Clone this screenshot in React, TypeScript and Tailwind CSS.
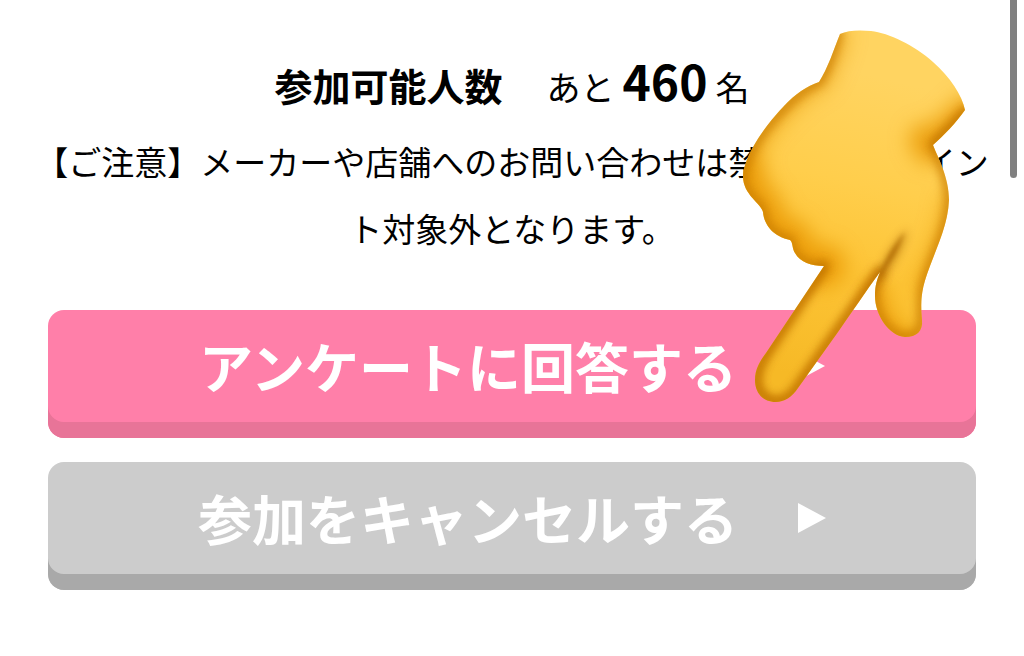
const HAND =
  "M840 34 C848 30 860 30 871 31 C889 33 914 45 933 62 C950 77 962 95 965 110 C956 123 944 135 933 145 C938 158 949 177 949 200 C948 223 939 242 930 266 C922 287 920 298 922 320 C923 331 917 337 905 337 C889 336 875 315 875 296 C875 285 877 280 880 272 C866 291 852 312 838 332 L798 388 C792 397 784 402 776 402 C763 402 755 393 755 380 C755 369 760 361 766 353 L824 266 C811 266 800 262 795 253 C792 249 793 242 790 240 C775 237 764 226 763 212 C761 203 743 195 743 176 C744 158 761 130 784 106 C795 94 807 86 819 82 C828 68 834 49 840 34 Z";

function PointingHand() {
  return (
    <svg
      viewBox="740 26 230 380"
      className="pointer-events-none absolute top-[26px] right-[54px] h-[380px] w-[230px]"
      aria-hidden="true"
    >
      <defs>
        <linearGradient id="skin" gradientUnits="userSpaceOnUse" x1="890" y1="80" x2="820" y2="380">
          <stop offset="0" stopColor="#ffd461" />
          <stop offset="0.35" stopColor="#ffce4c" />
          <stop offset="0.65" stopColor="#fdc435" />
          <stop offset="1" stopColor="#f6b926" />
        </linearGradient>
        <clipPath id="hand-clip">
          <path d={HAND} />
        </clipPath>
        <filter id="soft-wide" filterUnits="userSpaceOnUse" x="700" y="0" width="310" height="440">
          <feGaussianBlur stdDeviation="10" />
        </filter>
        <filter id="soft" filterUnits="userSpaceOnUse" x="700" y="0" width="310" height="440">
          <feGaussianBlur stdDeviation="5" />
        </filter>
        <filter id="soft-fine" filterUnits="userSpaceOnUse" x="700" y="0" width="310" height="440">
          <feGaussianBlur stdDeviation="2" />
        </filter>
      </defs>
      <path d={HAND} fill="url(#skin)" />
      <g clipPath="url(#hand-clip)" fill="none" strokeLinecap="round" strokeLinejoin="round">
        <g stroke="#e89600" filter="url(#soft-wide)">
          <path
            d="M838 34 C834 49 828 68 819 82 C795 90 744 145 743 176"
            strokeWidth="20"
            opacity="0.55"
          />
          <path
            d="M743 168 C743 195 761 203 763 212 C764 226 775 237 790 240 C793 262 811 266 824 266"
            strokeWidth="42"
            opacity="0.8"
          />
          <path d="M968 112 L930 148 L925 140" strokeWidth="32" opacity="0.8" />
          <path d="M949 200 C949 230 930 260 923 288" strokeWidth="14" opacity="0.6" />
          <path d="M875 290 C875 315 889 340 908 340" strokeWidth="22" opacity="0.7" />
        </g>
        <path
          d="M838 32 C834 49 828 68 819 82 C795 90 744 145 743 176 C743 195 761 203 763 212 C764 226 775 237 790 240 C793 262 811 266 824 266 L766 353 C745 385 762 402 776 402 C790 402 798 388 798 388 L880 272 C865 310 889 336 905 337 C930 337 918 310 923 288 C930 260 949 230 949 200 C949 177 938 158 933 145 L967 110"
          stroke="#c97c00"
          strokeWidth="9"
          opacity="0.85"
          filter="url(#soft)"
        />
        <g stroke="#c07400" filter="url(#soft)">
          <path d="M824 266 L766 353 C745 385 762 402 776 402 C790 402 798 388 798 388 L880 272" strokeWidth="9" opacity="0.75" />
          <path d="M967 112 L934 145" strokeWidth="6" opacity="0.7" />
        </g>
        <path
          d="M876 284 C880 266 891 246 908 229 C902 250 894 262 884 276 Z"
          fill="#a96400"
          opacity="0.65"
          filter="url(#soft)"
        />
        <path
          d="M877 280 C884 262 893 246 905 232 C899 248 892 260 881 275 Z"
          fill="#a96400"
          opacity="0.75"
          filter="url(#soft-fine)"
        />
      </g>
    </svg>
  );
}

function Arrow() {
  return (
    <svg viewBox="0 0 28 32" className="h-8 w-7 shrink-0" aria-hidden="true">
      <path d="M0 1 L28 16 L0 31 Z" fill="#fff" />
    </svg>
  );
}

const BUTTON =
  "flex h-32 w-full items-center justify-center gap-[60px] rounded-2xl pb-4 text-[54px] leading-none font-bold whitespace-nowrap text-white";

export default function App() {
  return (
    <main
      lang="ja"
      className="relative min-h-screen overflow-hidden bg-white pt-10 pb-16 text-center font-['Noto_Sans_CJK_JP',sans-serif] text-black"
    >
      <p className="mb-2 flex h-20 items-baseline justify-center text-[34px] leading-[80px]">
        <strong className="text-[38px] font-bold">参加可能人数</strong>
        <span className="ml-11">あと</span>
        <strong className="ml-2 text-[48px] font-bold">460</strong>
        <span className="ml-2">名</span>
      </p>
      <p className="px-7 text-[33px] leading-[67px]">
        【ご注意】メーカーや店舗へのお問い合わせは禁止です。ポイント対象外となります。
      </p>
      <div className="mt-12 flex flex-col gap-6 px-12">
        <button type="button" className={`${BUTTON} bg-[#ff7fa9] shadow-[inset_0_-16px_0_#e87498]`}>
          アンケートに回答する
          <Arrow />
        </button>
        <button type="button" className={`${BUTTON} bg-[#cccccc] shadow-[inset_0_-16px_0_#a9a9a9]`}>
          参加をキャンセルする
          <Arrow />
        </button>
      </div>
      <PointingHand />
      <div className="absolute top-0 right-[7px] h-[178px] w-[7px] rounded-b-full bg-[#808080]" />
    </main>
  );
}
